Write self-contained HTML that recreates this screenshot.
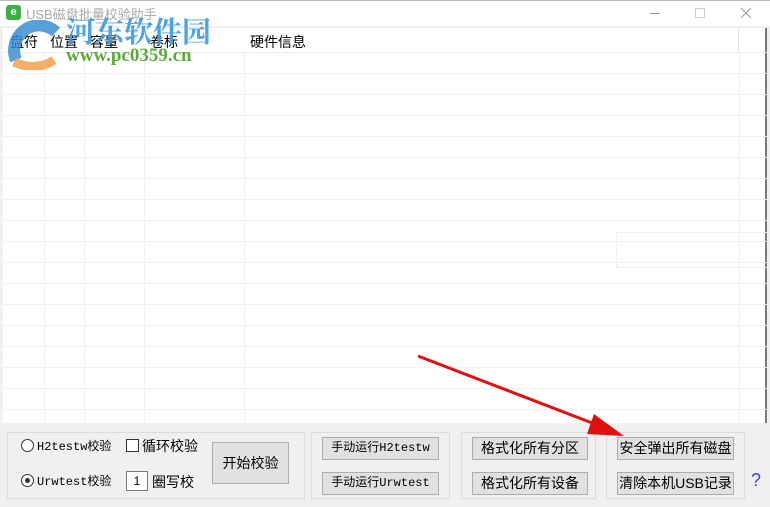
<!DOCTYPE html>
<html><head><meta charset="utf-8"><style>
*{margin:0;padding:0;box-sizing:border-box}
body{width:770px;height:507px;background:#f0f0f0;font-family:"Liberation Sans","Noto Sans CJK SC",sans-serif;font-size:13px;color:#000;position:relative;overflow:hidden}
.a{position:absolute}
.btn{position:absolute;background:#e1e1e1;border:1px solid #adadad;text-align:center;font-size:13px}
.m{font-family:'Liberation Mono','Noto Sans CJK SC',monospace;font-size:12px}
.grp{position:absolute;border:1px solid #dcdcdc;background:#f0f0f0}
.hl{position:absolute;left:3px;width:764px;height:1px;background:#f0f0f0}
.vl{position:absolute;top:52px;width:1px;height:371px;background:#f0f0f0}
</style></head><body>
<div class="a" style="left:0;top:0;width:770px;height:26px;background:#fff;border-top:1px solid #bbb"></div>
<div class="a" style="left:6px;top:5px;width:15px;height:15px;background:#3cb043;border-radius:3px;color:#fff;font-size:11px;font-weight:bold;text-align:center;line-height:15px">e</div>
<div class="a" style="left:26px;top:4px;color:#aaa;font-size:13px">USB磁盘批量校验助手</div>
<div class="a" style="left:650px;top:13px;width:10px;height:1px;background:#999"></div>
<div class="a" style="left:695px;top:8px;width:10px;height:10px;border:1px solid #ccc"></div>
<svg class="a" style="left:740px;top:7px" width="12" height="12"><path d="M1 1L11 11M11 1L1 11" stroke="#999" stroke-width="1"/></svg>
<div class="a" style="left:3px;top:28px;width:764px;height:395px;background:#fff;border-right:2px solid #777"></div>
<div class="a" style="left:3px;top:52px;width:764px;height:1px;background:#eee"></div>
<div class="hl" style="top:73px"></div><div class="hl" style="top:94px"></div><div class="hl" style="top:115px"></div><div class="hl" style="top:136px"></div><div class="hl" style="top:157px"></div><div class="hl" style="top:178px"></div><div class="hl" style="top:199px"></div><div class="hl" style="top:220px"></div><div class="hl" style="top:241px"></div><div class="hl" style="top:262px"></div><div class="hl" style="top:283px"></div><div class="hl" style="top:304px"></div><div class="hl" style="top:325px"></div><div class="hl" style="top:346px"></div><div class="hl" style="top:367px"></div><div class="hl" style="top:388px"></div><div class="hl" style="top:409px"></div>
<div class="vl" style="left:44px"></div><div class="vl" style="left:84px"></div><div class="vl" style="left:144px"></div><div class="vl" style="left:244px"></div><div class="vl" style="left:739px"></div>
<div class="a" style="left:738px;top:28px;width:1px;height:24px;background:#e5e5e5"></div>
<div class="a" style="left:616px;top:232px;width:154px;height:36px;border:1px solid #f0f0f0"></div>
<div class="a" style="left:10px;top:32px;font-size:14px">盘符</div>
<div class="a" style="left:50px;top:32px;font-size:14px">位置</div>
<div class="a" style="left:90px;top:32px;font-size:14px">容量</div>
<div class="a" style="left:150px;top:32px;font-size:14px">卷标</div>
<div class="a" style="left:250px;top:32px;font-size:14px">硬件信息</div>
<svg class="a" style="left:6px;top:20px" width="60" height="50"><path d="M10 40 A25 25 0 0 1 50 12" stroke="#3a8fd6" stroke-width="12" fill="none" opacity=".85"/><path d="M8 42 Q30 52 48 40" stroke="#f5a04a" stroke-width="9" fill="none" opacity=".85"/></svg>
<div class="a" style="left:66px;top:10px;color:#3a9ae0;font-size:29px;font-weight:bold;font-family:'Noto Serif CJK SC',serif;opacity:.9">河东软件园</div>
<div class="a" style="left:66px;top:45px;color:#5aaa3a;font-size:19px;font-weight:bold;font-family:'Liberation Serif',serif">www.pc0359.cn</div>
<div class="grp" style="left:7px;top:432px;width:298px;height:67px"></div>
<div class="grp" style="left:311px;top:432px;width:139px;height:67px"></div>
<div class="grp" style="left:461px;top:432px;width:135px;height:67px"></div>
<div class="grp" style="left:606px;top:432px;width:139px;height:67px"></div>
<div class="a" style="left:21px;top:439px;width:13px;height:13px;border:1px solid #333;border-radius:50%;background:#fff"></div>
<div class="a m" style="left:37px;top:437px">H2testw校验</div>
<div class="a" style="left:21px;top:474px;width:13px;height:13px;border:1px solid #333;border-radius:50%;background:#fff"><div class="a" style="left:3px;top:3px;width:5px;height:5px;border-radius:50%;background:#333"></div></div>
<div class="a m" style="left:37px;top:472px">Urwtest校验</div>
<div class="a" style="left:126px;top:439px;width:13px;height:13px;border:1px solid #333;background:#fff"></div>
<div class="a" style="left:142px;top:436px;font-size:14px">循环校验</div>
<div class="a" style="left:126px;top:471px;width:22px;height:20px;border:1px solid #7a7a7a;background:#fff;text-align:center;font-size:12px;line-height:18px">1</div>
<div class="a" style="left:152px;top:472px;font-size:14px">圈写校</div>
<div class="btn" style="left:212px;top:442px;width:77px;height:42px;line-height:40px;font-size:14px">开始校验</div>
<div class="btn m" style="left:322px;top:437px;width:117px;height:23px;line-height:21px">手动运行H2testw</div>
<div class="btn m" style="left:322px;top:472px;width:117px;height:23px;line-height:21px">手动运行Urwtest</div>
<div class="btn" style="left:472px;top:437px;width:116px;height:23px;line-height:21px;font-size:14px">格式化所有分区</div>
<div class="btn" style="left:472px;top:472px;width:116px;height:23px;line-height:21px;font-size:14px">格式化所有设备</div>
<div class="btn" style="left:617px;top:437px;width:117px;height:23px;line-height:21px;font-size:14px">安全弹出所有磁盘</div>
<div class="btn" style="left:617px;top:472px;width:117px;height:23px;line-height:21px;font-size:14px">清除本机USB记录</div>
<div class="a" style="left:751px;top:470px;color:#4040ff;font-size:18px">?</div>
<svg class="a" style="left:0;top:0" width="770" height="507"><line x1="418" y1="356" x2="600" y2="426" stroke="#e01010" stroke-width="3"/><polygon points="624,436 594,414 587,434" fill="#e01010"/></svg>
</body></html>
